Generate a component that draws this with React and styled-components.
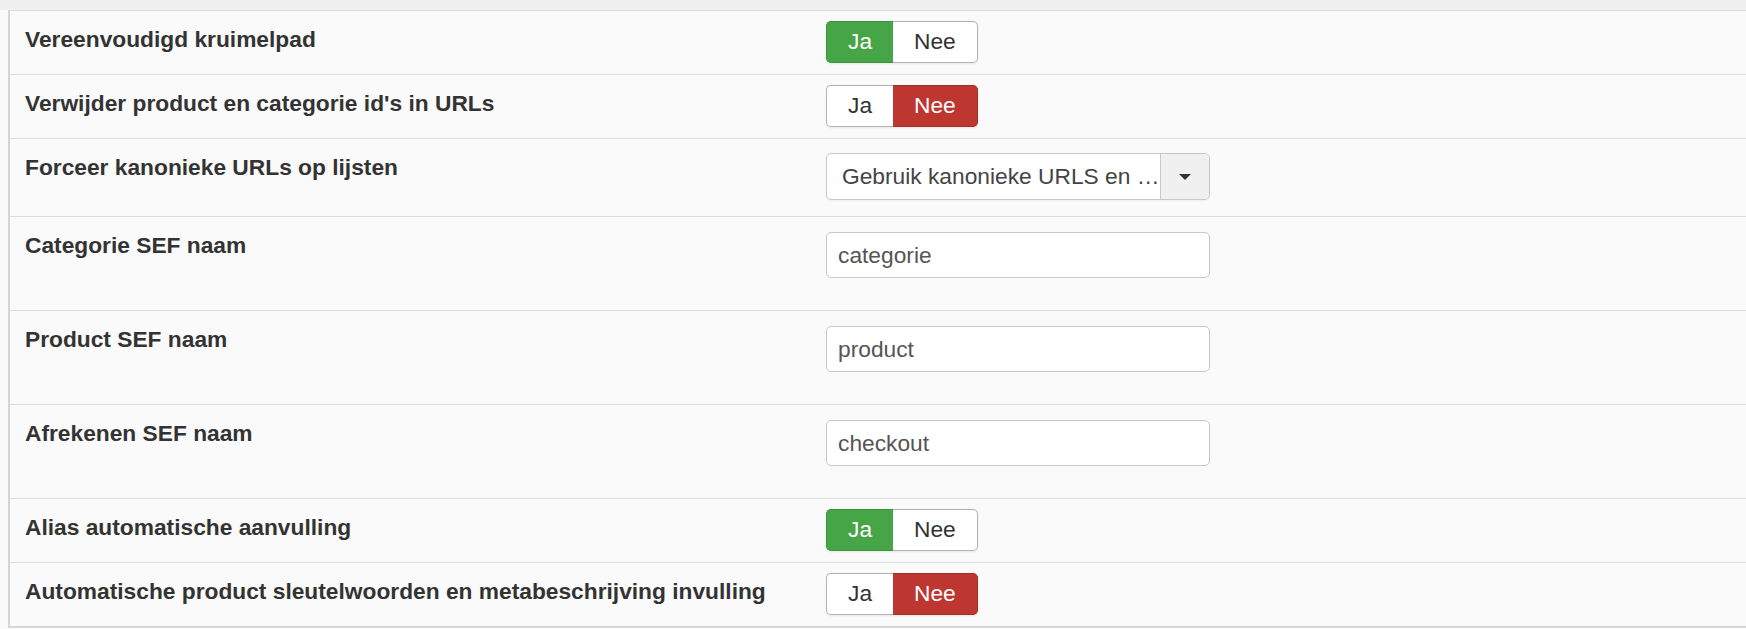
import React from "react";
import styled, { createGlobalStyle, css } from "styled-components";

const GlobalStyle = createGlobalStyle`
  html, body {
    margin: 0;
    padding: 0;
    background: #fafafa;
    font-family: "Liberation Sans", Arial, sans-serif;
    font-size: 22.75px;
    color: #333;
  }
`;

const rows = [
  { label: "Vereenvoudigd kruimelpad", type: "toggle", value: true },
  { label: "Verwijder product en categorie id's in URLs", type: "toggle", value: false },
  {
    label: "Forceer kanonieke URLs op lijsten",
    type: "select",
    value: "Gebruik kanonieke URLS en …",
  },
  { label: "Categorie SEF naam", type: "text", value: "categorie" },
  { label: "Product SEF naam", type: "text", value: "product" },
  { label: "Afrekenen SEF naam", type: "text", value: "checkout" },
  { label: "Alias automatische aanvulling", type: "toggle", value: true },
  {
    label: "Automatische product sleutelwoorden en metabeschrijving invulling",
    type: "toggle",
    value: false,
  },
];

const heights = { toggle: 64, select: 78, text: 94 };
const offsets = { toggle: 10, select: 14, text: 15 };

export default function App() {
  return (
    <>
      <GlobalStyle />
      <TopBand />
      <List>
        {rows.map((row) => (
          <Row key={row.label} $h={heights[row.type]}>
            <Label>{row.label}</Label>
            <Control $offset={offsets[row.type]}>
              {row.type === "toggle" && (
                <ToggleGroup>
                  <ToggleButton $active={row.value} $tone="yes">
                    Ja
                  </ToggleButton>
                  <ToggleButton $active={!row.value} $tone="no">
                    Nee
                  </ToggleButton>
                </ToggleGroup>
              )}
              {row.type === "select" && (
                <Select>
                  <SelectText>{row.value}</SelectText>
                  <SelectArrow>
                    <Caret />
                  </SelectArrow>
                </Select>
              )}
              {row.type === "text" && (
                <TextInput type="text" defaultValue={row.value} />
              )}
            </Control>
          </Row>
        ))}
      </List>
    </>
  );
}

const TopBand = styled.div`
  height: 10px;
  background: #f0f0f0;
`;

const List = styled.div`
  border-top: 1px solid #dcdcdc;
  margin-left: 8px;
  border-left: 2px solid #d6d6d6;
  border-bottom: 1px solid #dcdcdc;
`;

const Row = styled.div`
  box-sizing: border-box;
  height: ${(p) => p.$h}px;
  display: grid;
  grid-template-columns: 801px 1fr;
  padding-left: 15px;
  border-bottom: 1px solid #dcdcdc;
  background: #fafafa;
  &:last-child {
    border-bottom: 1px solid #d4d4d4;
  }
`;

const Label = styled.div`
  margin-top: 15px;
  font-weight: bold;
  line-height: 26px;
  color: #333;
  white-space: nowrap;
`;

const Control = styled.div`
  padding-top: ${(p) => p.$offset}px;
`;

const ToggleGroup = styled.div`
  display: inline-flex;
  border-radius: 5px;
  box-shadow: 0 1px 2px rgba(0, 0, 0, 0.08);
`;

const activeTone = {
  yes: css`
    background: #46a546;
    border-color: #3d923d;
    color: #fff;
  `,
  no: css`
    background: #bd362f;
    border-color: #a32f29;
    color: #fff;
  `,
};

const ToggleButton = styled.button`
  font-family: inherit;
  font-size: 22.75px;
  line-height: 26px;
  padding: 6px 21px 8px;
  margin: 0;
  border: 1px solid #b3b3b3;
  background: #fff;
  color: #333;
  cursor: pointer;
  &:first-child {
    border-radius: 5px 0 0 5px;
    border-right: none;
  }
  &:last-child {
    border-radius: 0 5px 5px 0;
    border-left: none;
  }
  ${(p) => p.$active && activeTone[p.$tone]}
`;

const Select = styled.div`
  box-sizing: border-box;
  width: 384px;
  height: 47px;
  display: flex;
  background: #fff;
  border: 1px solid #c8c8c8;
  border-radius: 5px;
  box-shadow: 0 1px 2px rgba(0, 0, 0, 0.05);
  overflow: hidden;
`;

const SelectText = styled.div`
  flex: 1;
  min-width: 0;
  padding: 0 2px 0 15px;
  line-height: 45px;
  color: #444;
  white-space: nowrap;
`;

const SelectArrow = styled.div`
  width: 48px;
  flex: none;
  display: flex;
  align-items: center;
  justify-content: center;
  background: #f0f0f0;
  border-left: 1px solid #c8c8c8;
`;

const Caret = styled.span`
  width: 0;
  height: 0;
  border-left: 6px solid transparent;
  border-right: 6px solid transparent;
  border-top: 6px solid #333;
`;

const TextInput = styled.input`
  box-sizing: border-box;
  width: 384px;
  height: 46px;
  margin: 0;
  padding: 0 11px;
  font-family: inherit;
  font-size: 22.75px;
  line-height: 44px;
  color: #555;
  background: #fff;
  border: 1px solid #c8c8c8;
  border-radius: 5px;
  outline: none;
`;
